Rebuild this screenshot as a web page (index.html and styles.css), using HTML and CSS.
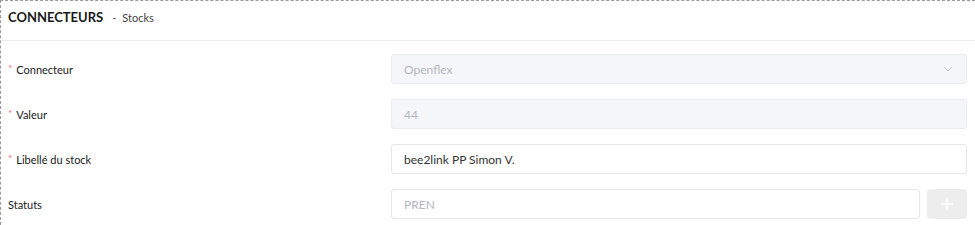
FILE: index.html
```html
<!DOCTYPE html>
<html lang="fr">
<head>
<meta charset="utf-8">
<title>Connecteurs - Stocks</title>
<link rel="stylesheet" href="styles.css">
</head>
<body>
<div class="panel">
  <div class="panel-header">
    <span class="title">CONNECTEURS</span>
    <span class="dash">-</span>
    <span class="subtitle">Stocks</span>
  </div>
  <div class="form">
    <div class="row">
      <label class="label"><span class="req">*</span>Connecteur</label>
      <div class="control">
        <div class="input disabled select">
          <span class="placeholder">Openflex</span>
          <svg class="chevron" width="10" height="6" viewBox="0 0 10 6"><path d="M1 1 L5 5 L9 1" fill="none" stroke="#c0c4cc" stroke-width="1"/></svg>
        </div>
      </div>
    </div>
    <div class="row">
      <label class="label"><span class="req">*</span>Valeur</label>
      <div class="control">
        <div class="input disabled"><span class="placeholder">44</span></div>
      </div>
    </div>
    <div class="row">
      <label class="label"><span class="req">*</span>Libellé du stock</label>
      <div class="control">
        <div class="input"><span class="value">bee2link PP Simon V.</span></div>
      </div>
    </div>
    <div class="row">
      <label class="label">Statuts</label>
      <div class="control with-btn">
        <div class="input grow"><span class="placeholder">PREN</span></div>
        <button class="add-btn" type="button">
          <svg width="14" height="14" viewBox="0 0 14 14"><path d="M7 1 V13 M1 7 H13" stroke="#fff" stroke-width="1.6"/></svg>
        </button>
      </div>
    </div>
  </div>
</div>
</body>
</html>
```
FILE: styles.css
```css
* { box-sizing: border-box; }
html, body { margin: 0; padding: 0; background: #fff; }
body {
  font-family: Lato, "Open Sans", sans-serif;
  color: #1f1f1f;
  width: 975px;
  height: 225px;
  overflow: hidden;
}
.panel {
  border-top: 1px dashed #9a9a9a;
  border-left: 1px dashed #9a9a9a;
  height: 225px;
  overflow: hidden;
}
.panel-header {
  height: 40px;
  border-bottom: 1px solid #ececec;
  display: flex;
  align-items: center;
  padding: 0 0 7px 7px;
}
.title {
  font-size: 13px;
  font-weight: 700;
  color: #1a1a1a;
}
.dash {
  font-size: 11px;
  color: #555;
  margin: 0 6px 0 9px;
}
.subtitle {
  font-size: 11px;
  color: #444;
}
.form {
  padding: 13px 8px 0 7px;
  display: flex;
  flex-direction: column;
  gap: 15px;
}
.row {
  display: flex;
  align-items: center;
  height: 30px;
}
.label {
  width: 383px;
  font-size: 11px;
  color: #1a1a1a;
  display: flex;
  align-items: center;
}
.req {
  color: #f56c6c;
  font-size: 10px;
  margin-right: 4px;
  position: relative;
  top: -1px;
}
.control {
  flex: 1;
  display: flex;
  height: 30px;
}
.input {
  flex: 1;
  height: 30px;
  border: 1px solid #e4e6ea;
  border-radius: 3px;
  display: flex;
  align-items: center;
  padding: 0 12px;
  font-size: 12px;
}
.input.disabled {
  background: #f5f6fa;
  border-color: #e9ebef;
}
.select { justify-content: space-between; }
.chevron { margin-right: 1px; }
.placeholder { color: #b4b6ba; }
.value { color: #333; }
.with-btn { gap: 7px; }
.add-btn {
  width: 40px;
  height: 30px;
  border: none;
  border-radius: 4px;
  background: #ededee;
  display: flex;
  align-items: center;
  justify-content: center;
  padding: 0;
}
```
